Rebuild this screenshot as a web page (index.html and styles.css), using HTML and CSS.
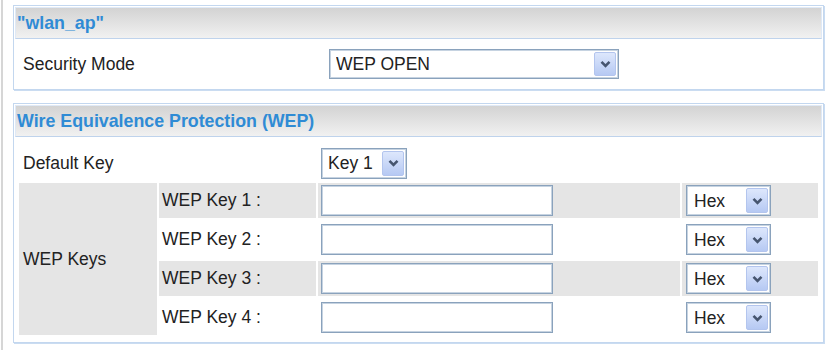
FILE: index.html
```html
<!DOCTYPE html>
<html lang="en">
<head>
  <meta charset="UTF-8">
  <meta name="viewport" content="width=device-width, initial-scale=1.0">
  <title>Wireless Security</title>
  <link rel="stylesheet" href="styles.css">
</head>
<body>
  <div class="page">
    <div class="box">
      <div class="box-head">"wlan_ap"</div>
      <div class="box-body mode-row">
        <label class="field-label" for="secMode">Security Mode</label>
        <span class="dd dd-mode">
          <select id="secMode"><option>WEP OPEN</option><option>WEP SHARED</option><option>WPA-PSK</option></select>
          <span class="dd-btn"><svg width="11" height="8" viewBox="0 0 11 8"><path d="M1.5 1.8l4 4 4-4" /></svg></span>
        </span>
      </div>
    </div>

    <div class="box">
      <div class="box-head">Wire Equivalence Protection (WEP)</div>
      <div class="box-body wep-body">
        <table class="wep">
          <colgroup>
            <col class="c1"><col class="c2"><col class="c3"><col class="c4">
          </colgroup>
          <tr class="default-row">
            <td colspan="2" class="first">Default Key</td>
            <td colspan="2">
              <span class="dd dd-key">
                <select><option>Key 1</option><option>Key 2</option><option>Key 3</option><option>Key 4</option></select>
                <span class="dd-btn"><svg width="11" height="8" viewBox="0 0 11 8"><path d="M1.5 1.8l4 4 4-4" /></svg></span>
              </span>
            </td>
          </tr>
          <tr class="shade">
            <td rowspan="4" class="keys-cell first">WEP Keys</td>
            <td>WEP Key 1 :</td>
            <td><input type="text" class="key-input"></td>
            <td class="fmt">
              <span class="dd dd-hex"><select><option>Hex</option><option>ASCII</option></select><span class="dd-btn"><svg width="11" height="8" viewBox="0 0 11 8"><path d="M1.5 1.8l4 4 4-4" /></svg></span></span>
            </td>
          </tr>
          <tr>
            <td>WEP Key 2 :</td>
            <td><input type="text" class="key-input"></td>
            <td class="fmt">
              <span class="dd dd-hex"><select><option>Hex</option><option>ASCII</option></select><span class="dd-btn"><svg width="11" height="8" viewBox="0 0 11 8"><path d="M1.5 1.8l4 4 4-4" /></svg></span></span>
            </td>
          </tr>
          <tr class="shade">
            <td>WEP Key 3 :</td>
            <td><input type="text" class="key-input"></td>
            <td class="fmt">
              <span class="dd dd-hex"><select><option>Hex</option><option>ASCII</option></select><span class="dd-btn"><svg width="11" height="8" viewBox="0 0 11 8"><path d="M1.5 1.8l4 4 4-4" /></svg></span></span>
            </td>
          </tr>
          <tr>
            <td>WEP Key 4 :</td>
            <td><input type="text" class="key-input"></td>
            <td class="fmt">
              <span class="dd dd-hex"><select><option>Hex</option><option>ASCII</option></select><span class="dd-btn"><svg width="11" height="8" viewBox="0 0 11 8"><path d="M1.5 1.8l4 4 4-4" /></svg></span></span>
            </td>
          </tr>
        </table>
      </div>
    </div>
  </div>
</body>
</html>
```

FILE: styles.css
```css
* { box-sizing: border-box; }
body {
  margin: 0;
  font-family: "Liberation Sans", Arial, sans-serif;
  font-size: 17.5px;
  color: #222;
  background: #fff;
}
.page {
  margin-left: 1px;
  border-left: 2px solid #d6d6d6;
  padding: 5px 6px 0 10px;
  min-height: 350px;
}
.box {
  border: 1px solid #c3d7ef;
  box-shadow: 1px 1px 0 #cadcf1;
}
.box + .box { margin-top: 13px; }
.box-head {
  margin: 1px 1px 0;
  height: 32px;
  padding-left: 1px;
  border: 1px solid #dfe9f6;
  border-bottom-color: #bfd3ec;
  background: linear-gradient(#d3d3d3, #f1f1f1);
  color: #2f8bd5;
  font-weight: bold;
  font-size: 17.8px;
  line-height: 30px;
  white-space: nowrap;
}
.mode-row {
  display: flex;
  align-items: center;
  height: 50px;
  padding-left: 9px;
}
.field-label { width: 306px; }

/* dropdowns */
.dd {
  position: relative;
  display: inline-block;
  vertical-align: middle;
}
.dd select {
  -webkit-appearance: none;
  appearance: none;
  display: block;
  height: 31px;
  margin: 0;
  padding: 0 0 0 6px;
  border: 1px solid #8aa2bc;
  box-shadow: inset 0 0 0 1px #c6d3e1;
  border-radius: 0;
  background: #fff;
  font: inherit;
  color: #222;
  outline: none;
}
.dd-mode select { width: 290px; height: 30px; }
.dd-key select { width: 86px; }
.dd-hex select { width: 85px; padding-left: 7px; }
.dd-btn {
  position: absolute;
  top: 3px;
  right: 3px;
  bottom: 3px;
  width: 22px;
  display: flex;
  align-items: center;
  justify-content: center;
  border: 1px solid #b3c5ee;
  border-radius: 2px;
  background: linear-gradient(#dde7fc, #b6c9f3);
  pointer-events: none;
}
.dd-btn svg { display: block; }
.dd-btn path {
  fill: none;
  stroke: #46556f;
  stroke-width: 2.6;
}

/* wep table */
.wep-body { padding: 2px 3px 3px; }
.wep {
  width: 803px;
  table-layout: fixed;
  border-collapse: separate;
  border-spacing: 2px 4px;
}
.c1 { width: 138px; }
.c2 { width: 157px; }
.c3 { width: 362px; }
.c4 { width: 136px; }
.wep td {
  height: 35px;
  padding: 0 3px;
  white-space: nowrap;
}
.wep td.first { padding-left: 4px; }
.wep td.fmt { padding-left: 4px; }
.default-row td { height: 36px; padding-top: 4px; }
.shade td, .keys-cell { background: #e5e5e5; }
.key-input {
  display: block;
  width: 232px;
  height: 31px;
  margin: 0;
  border: 1px solid #8aa2bc;
  box-shadow: inset 0 0 0 1px #c6d3e1;
  background: #fff;
  font: inherit;
  padding: 0 5px;
  outline: none;
}
```
